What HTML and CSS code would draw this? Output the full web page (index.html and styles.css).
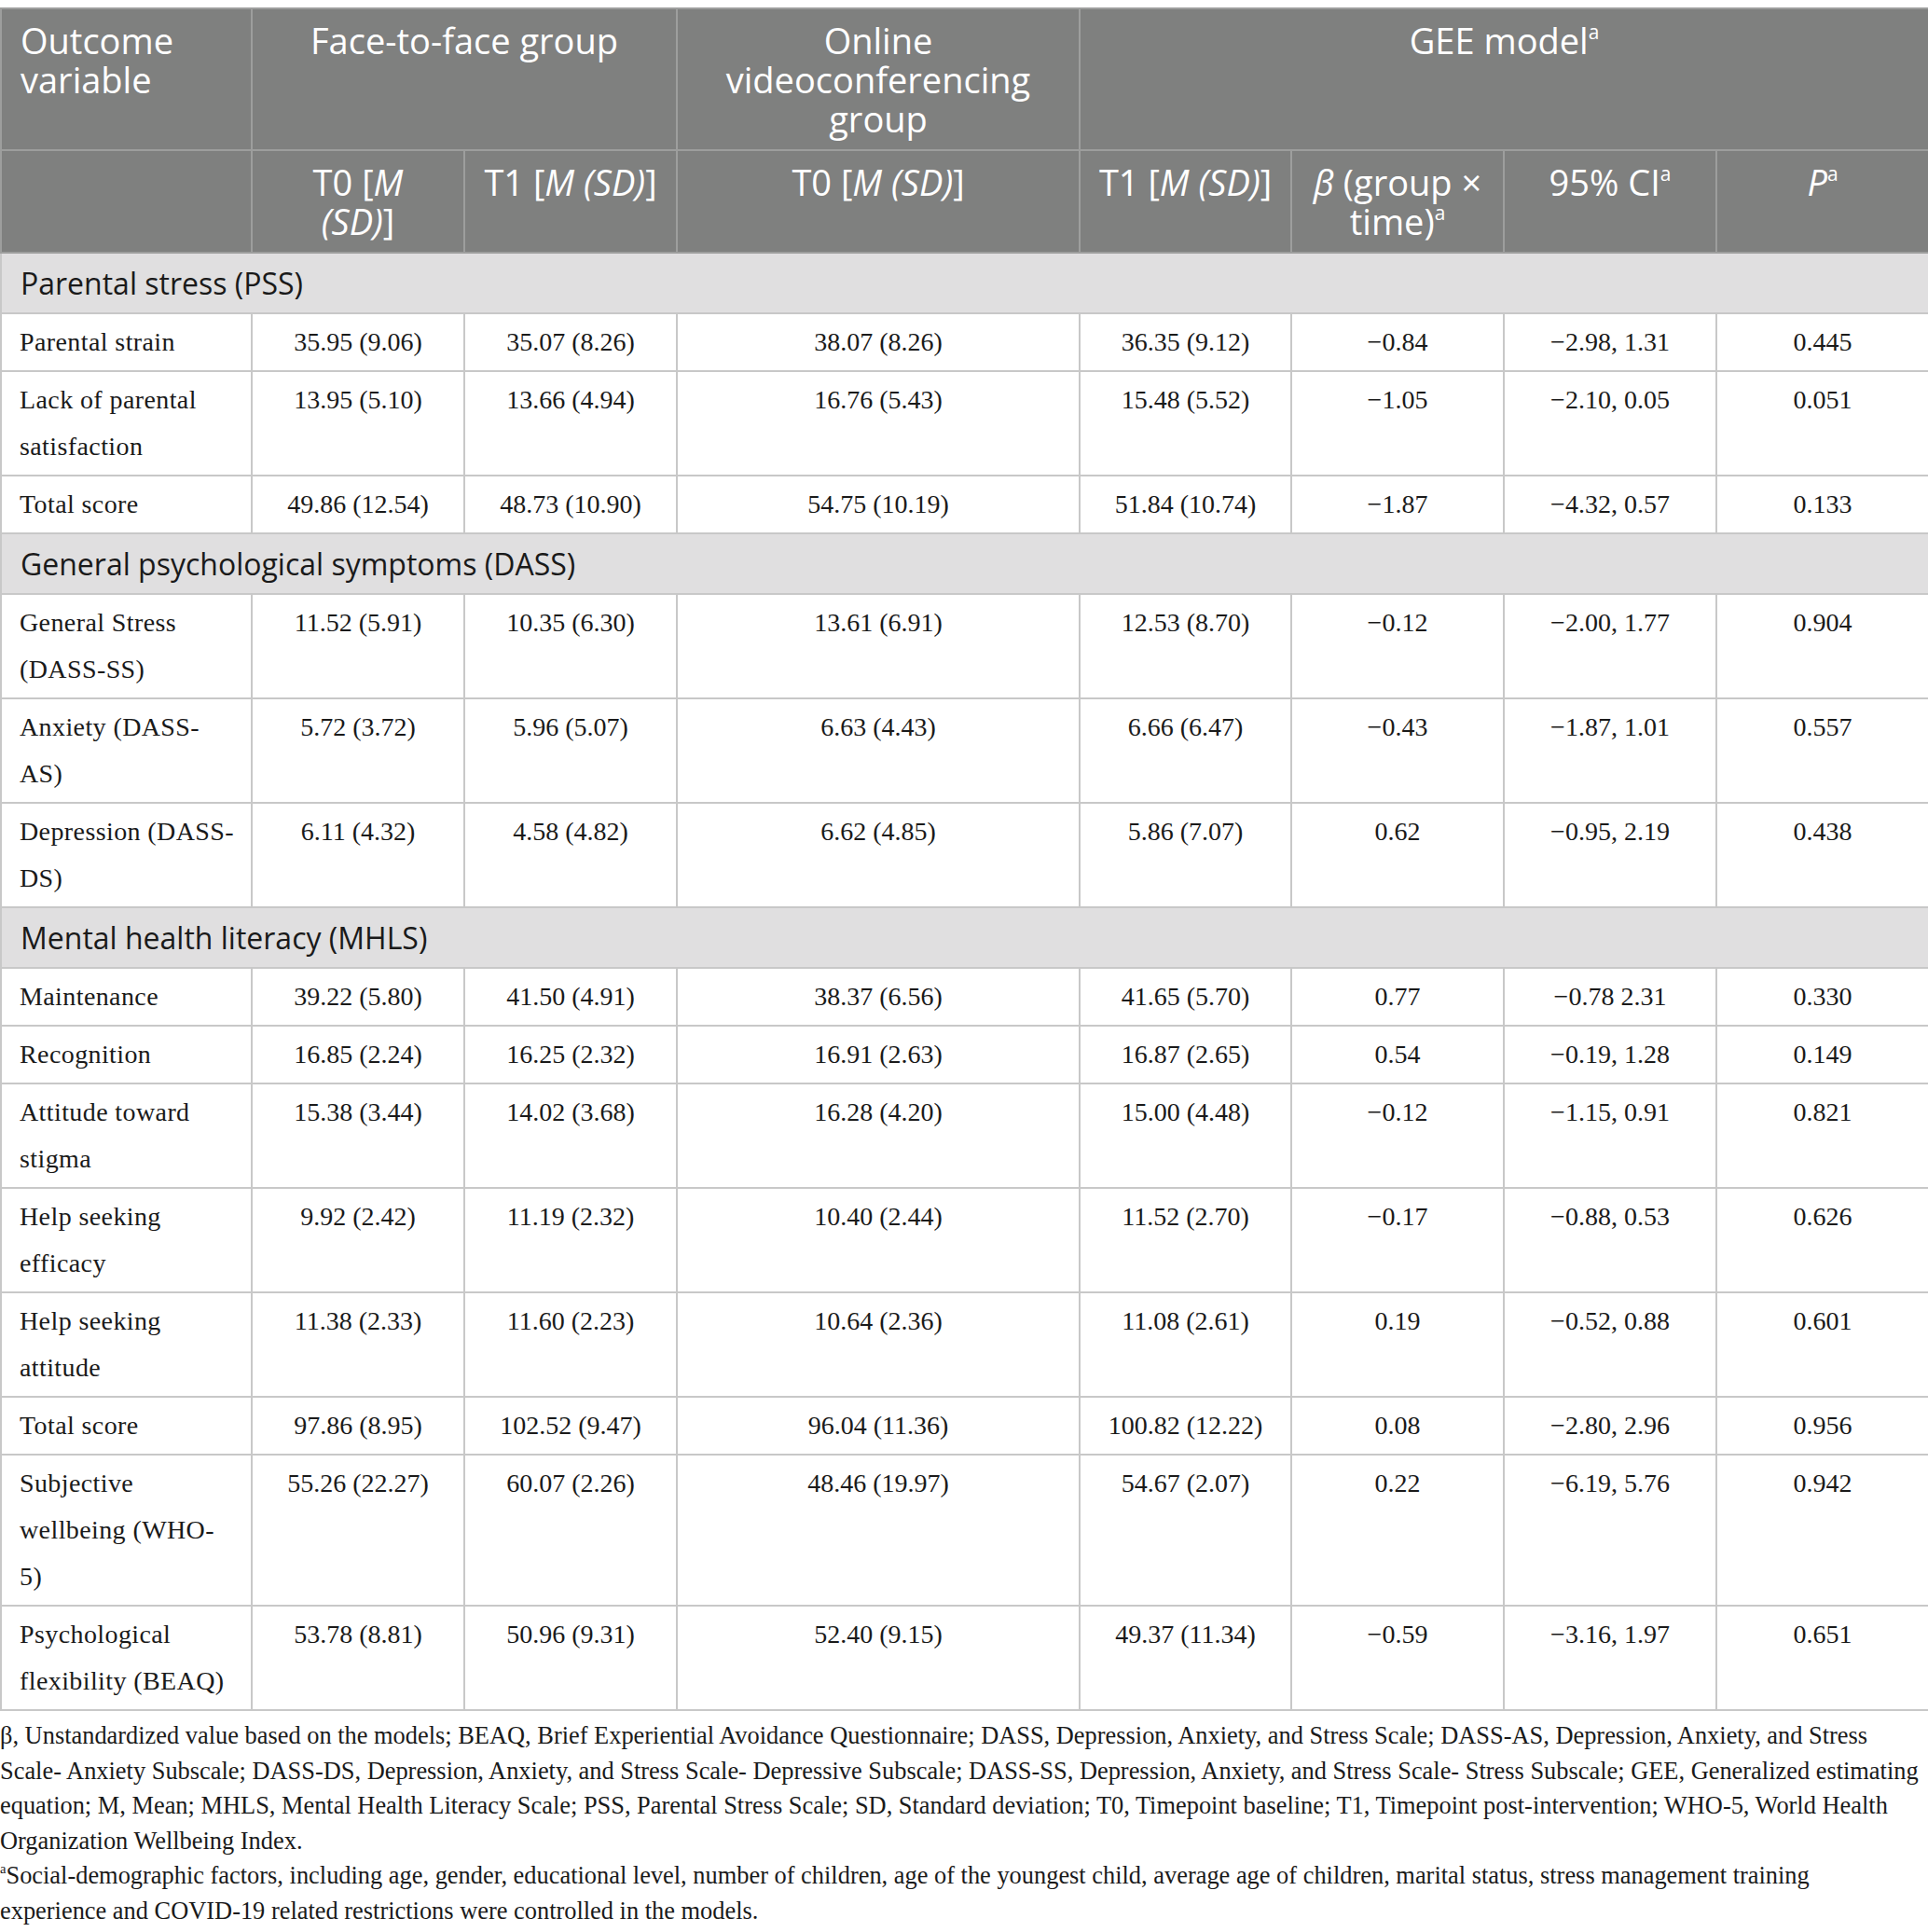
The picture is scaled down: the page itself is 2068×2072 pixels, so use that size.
FILE: index.html
```html
<!DOCTYPE html>
<html lang="en">
<head>
<meta charset="utf-8">
<title>Outcome variables by group</title>
<link rel="stylesheet" href="styles.css">
</head>
<body>
<table class="results">
  <colgroup>
    <col class="c-label">
    <col class="c-num">
    <col class="c-num">
    <col class="c-wide">
    <col class="c-num2">
    <col class="c-num">
    <col class="c-num">
    <col class="c-num">
  </colgroup>
  <thead>
    <tr>
      <th class="left">Outcome variable</th>
      <th colspan="2">Face-to-face group</th>
      <th>Online videoconferencing group</th>
      <th colspan="4">GEE model<sup>a</sup></th>
    </tr>
    <tr>
      <th></th>
      <th class="narrow">T0 [<i>M (SD)</i>]</th>
      <th>T1 [<i>M (SD)</i>]</th>
      <th>T0 [<i>M (SD)</i>]</th>
      <th>T1 [<i>M (SD)</i>]</th>
      <th><i>β</i> (group × time)<sup>a</sup></th>
      <th>95% CI<sup>a</sup></th>
      <th><i>P</i><sup>a</sup></th>
    </tr>
  </thead>
  <tbody>
    <tr class="section"><td colspan="8">Parental stress (PSS)</td></tr>
    <tr><td class="label">Parental strain</td><td>35.95 (9.06)</td><td>35.07 (8.26)</td><td>38.07 (8.26)</td><td>36.35 (9.12)</td><td>−0.84</td><td>−2.98, 1.31</td><td>0.445</td></tr>
    <tr><td class="label">Lack of parental satisfaction</td><td>13.95 (5.10)</td><td>13.66 (4.94)</td><td>16.76 (5.43)</td><td>15.48 (5.52)</td><td>−1.05</td><td>−2.10, 0.05</td><td>0.051</td></tr>
    <tr><td class="label">Total score</td><td>49.86 (12.54)</td><td>48.73 (10.90)</td><td>54.75 (10.19)</td><td>51.84 (10.74)</td><td>−1.87</td><td>−4.32, 0.57</td><td>0.133</td></tr>
    <tr class="section"><td colspan="8">General psychological symptoms (DASS)</td></tr>
    <tr><td class="label">General Stress (DASS-SS)</td><td>11.52 (5.91)</td><td>10.35 (6.30)</td><td>13.61 (6.91)</td><td>12.53 (8.70)</td><td>−0.12</td><td>−2.00, 1.77</td><td>0.904</td></tr>
    <tr><td class="label">Anxiety (DASS-AS)</td><td>5.72 (3.72)</td><td>5.96 (5.07)</td><td>6.63 (4.43)</td><td>6.66 (6.47)</td><td>−0.43</td><td>−1.87, 1.01</td><td>0.557</td></tr>
    <tr><td class="label">Depression (DASS-DS)</td><td>6.11 (4.32)</td><td>4.58 (4.82)</td><td>6.62 (4.85)</td><td>5.86 (7.07)</td><td>0.62</td><td>−0.95, 2.19</td><td>0.438</td></tr>
    <tr class="section"><td colspan="8">Mental health literacy (MHLS)</td></tr>
    <tr><td class="label">Maintenance</td><td>39.22 (5.80)</td><td>41.50 (4.91)</td><td>38.37 (6.56)</td><td>41.65 (5.70)</td><td>0.77</td><td>−0.78 2.31</td><td>0.330</td></tr>
    <tr><td class="label">Recognition</td><td>16.85 (2.24)</td><td>16.25 (2.32)</td><td>16.91 (2.63)</td><td>16.87 (2.65)</td><td>0.54</td><td>−0.19, 1.28</td><td>0.149</td></tr>
    <tr><td class="label">Attitude toward stigma</td><td>15.38 (3.44)</td><td>14.02 (3.68)</td><td>16.28 (4.20)</td><td>15.00 (4.48)</td><td>−0.12</td><td>−1.15, 0.91</td><td>0.821</td></tr>
    <tr><td class="label">Help seeking efficacy</td><td>9.92 (2.42)</td><td>11.19 (2.32)</td><td>10.40 (2.44)</td><td>11.52 (2.70)</td><td>−0.17</td><td>−0.88, 0.53</td><td>0.626</td></tr>
    <tr><td class="label">Help seeking attitude</td><td>11.38 (2.33)</td><td>11.60 (2.23)</td><td>10.64 (2.36)</td><td>11.08 (2.61)</td><td>0.19</td><td>−0.52, 0.88</td><td>0.601</td></tr>
    <tr><td class="label">Total score</td><td>97.86 (8.95)</td><td>102.52 (9.47)</td><td>96.04 (11.36)</td><td>100.82 (12.22)</td><td>0.08</td><td>−2.80, 2.96</td><td>0.956</td></tr>
    <tr><td class="label">Subjective wellbeing (WHO-5)</td><td>55.26 (22.27)</td><td>60.07 (2.26)</td><td>48.46 (19.97)</td><td>54.67 (2.07)</td><td>0.22</td><td>−6.19, 5.76</td><td>0.942</td></tr>
    <tr><td class="label">Psychological flexibility (BEAQ)</td><td>53.78 (8.81)</td><td>50.96 (9.31)</td><td>52.40 (9.15)</td><td>49.37 (11.34)</td><td>−0.59</td><td>−3.16, 1.97</td><td>0.651</td></tr>
  </tbody>
</table>
<div class="notes">
  <p>β, Unstandardized value based on the models; BEAQ, Brief Experiential Avoidance Questionnaire; DASS, Depression, Anxiety, and Stress Scale; DASS-AS, Depression, Anxiety, and Stress Scale- Anxiety Subscale; DASS-DS, Depression, Anxiety, and Stress Scale- Depressive Subscale; DASS-SS, Depression, Anxiety, and Stress Scale- Stress Subscale; GEE, Generalized estimating equation; M, Mean; MHLS, Mental Health Literacy Scale; PSS, Parental Stress Scale; SD, Standard deviation; T0, Timepoint baseline; T1, Timepoint post-intervention; WHO-5, World Health Organization Wellbeing Index.</p>
  <p class="fn"><sup>a</sup>Social-demographic factors, including age, gender, educational level, number of children, age of the youngest child, average age of children, marital status, stress management training experience and COVID-19 related restrictions were controlled in the models.</p>
</div>
</body>
</html>
```

FILE: styles.css
```css
body {
  margin: 8px 0 0;
  background: #ffffff;
  color: #1a1a1a;
}

.results {
  width: 2068px;
  border-collapse: collapse;
  table-layout: fixed;
}

.c-label { width: 269px; }
.c-num { width: 228px; }
.c-num2 { width: 227px; }
.c-wide { width: 432px; }

.results th {
  background: #7f807f;
  color: #ffffff;
  font-family: "Open Sans", "Noto Sans", sans-serif;
  font-weight: 400;
  font-size: 38px;
  line-height: 42px;
  padding: 12px 16px;
  border: 2px solid #9d9e9d;
  vertical-align: top;
  text-align: center;
}

.results th.left {
  text-align: left;
  padding-left: 20px;
}

.results th.narrow {
  padding-left: 30px;
  padding-right: 30px;
}

.results th sup,
.notes sup {
  font-size: 0.55em;
  line-height: 0;
  vertical-align: 0.75em;
}

.results td {
  font-family: "Liberation Serif", "Times New Roman", serif;
  font-size: 28px;
  line-height: 50px;
  padding: 5px 20px;
  border: 2px solid #c8c8c8;
  vertical-align: top;
  text-align: center;
  color: #1a1a1a;
}

.results td.label {
  text-align: left;
  letter-spacing: 0.4px;
  padding-left: 19px;
  padding-right: 16.5px;
}

.results tr.section td {
  background: #e0dfe0;
  font-family: "Open Sans", "Noto Sans", sans-serif;
  font-size: 32px;
  line-height: 41px;
  padding: 11px 20px;
  text-align: left;
  color: #1a1a1a;
}

.notes {
  margin-top: 8px;
  font-family: "Liberation Serif", "Times New Roman", serif;
  font-size: 26.4px;
  line-height: 37.5px;
  color: #1a1a1a;
}

.notes p {
  margin: 0;
}

.notes .fn {
  padding-right: 30px;
}
```
